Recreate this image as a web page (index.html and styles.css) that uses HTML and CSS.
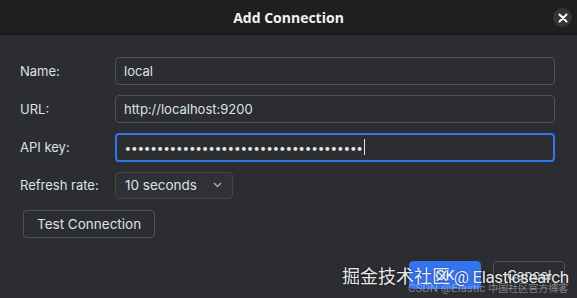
FILE: index.html
```html
<!DOCTYPE html>
<html>
<head>
<meta charset="utf-8">
<link rel="stylesheet" href="styles.css">
</head>
<body>
<div class="dialog">
  <div class="titlebar">
    <span class="title">Add Connection</span>
    <span class="close">
      <svg width="10" height="10" viewBox="0 0 10 10"><path d="M1.5 1.5 L8.5 8.5 M8.5 1.5 L1.5 8.5" stroke="#ffffff" stroke-width="2" stroke-linecap="round"/></svg>
    </span>
  </div>
  <div class="content">
    <div class="form">
      <label class="label">Name:</label>
      <div class="field">local</div>
      <label class="label">URL:</label>
      <div class="field">http://localhost:9200</div>
      <label class="label">API key:</label>
      <div class="field focus"><span class="dots">•••••••••••••••••••••••••••••••••••••</span><span class="caret"></span></div>
      <label class="label">Refresh rate:</label>
      <div class="select-wrap">
        <div class="select">10 seconds
          <svg width="9" height="6" viewBox="0 0 9 6"><path d="M1 1 L4.5 4.5 L8 1" fill="none" stroke="#b4b8bf" stroke-width="1.2"/></svg>
        </div>
      </div>
    </div>
    <div class="test-row"><button class="btn">Test Connection</button></div>
    <div class="actions">
      <button class="btn primary">OK</button>
      <button class="btn">Cancel</button>
    </div>
  </div>
  <div class="wm1"><span class="cjk">掘金技术社区</span><span class="lat"> @ Elasticsearch</span></div>
  <div class="wm2"><span class="lat2">CSDN @Elastic </span><span class="cjk2">中国社区官方博客</span></div>
</div>
</body>
</html>
```

FILE: styles.css
```css
html, body {
  margin: 0;
  padding: 0;
  background: #2b2d30;
}
.dialog {
  position: relative;
  width: 577px;
  height: 298px;
  overflow: hidden;
  background: #2b2d30;
  font-family: "Inter", "Noto Sans", sans-serif;
  font-size: 13px;
  color: #dfe1e5;
}
.titlebar {
  height: 34px;
  background: #1f1f1f;
  border-bottom: 1px solid #161616;
  display: flex;
  align-items: center;
  justify-content: center;
  position: relative;
}
.title {
  font-family: "Open Sans", "Noto Sans", sans-serif;
  font-weight: 700;
  font-size: 14px;
  color: #f2f2f2;
  margin-top: 1px;
}
.close {
  position: absolute;
  right: 5px;
  top: 8px;
  width: 19px;
  height: 19px;
  border-radius: 50%;
  background: #353535;
  display: flex;
  align-items: center;
  justify-content: center;
}
.content {
  padding: 22px 22px 0 20px;
}
.form {
  display: grid;
  grid-template-columns: 95px 440px;
  grid-auto-rows: 28px;
  row-gap: 10px;
  align-items: center;
}
.label {
  color: #dfe1e5;
}
.field {
  box-sizing: border-box;
  height: 28px;
  border: 1px solid #4e5157;
  border-radius: 4px;
  padding: 0 8px;
  display: flex;
  align-items: center;
  color: #dfe1e5;
}
.field.focus {
  border: 2px solid #3574f0;
  padding-left: 8px;
  height: 29px;
}
.dots {
  letter-spacing: 0.75px;
  font-size: 12px;
  font-weight: 700;
  color: #e6e6e6;
}
.caret {
  display: inline-block;
  width: 1px;
  height: 16px;
  background: #dfe1e5;
  margin-left: 1px;
}
.select-wrap {
  display: flex;
}
.select {
  box-sizing: border-box;
  width: 118px;
  height: 27px;
  border: 1px solid #43454a;
  border-radius: 4px;
  background: #2f3135;
  padding: 0 10px 0 9px;
  display: flex;
  align-items: center;
  justify-content: space-between;
  font-size: 13.5px;
}
.test-row {
  padding: 11px 0 0 3px;
}
.btn {
  box-sizing: border-box;
  height: 28px;
  border: 1px solid #4e5157;
  border-radius: 4px;
  background: transparent;
  color: #dfe1e5;
  font-family: "Inter", "Noto Sans", sans-serif;
  font-size: 13.5px;
  padding: 0 13px;
}
.actions {
  display: flex;
  justify-content: flex-end;
  gap: 12px;
  margin-top: 23px;
  margin-right: -10px;
}
.actions .btn {
  width: 72px;
}
.btn.primary {
  background: #3574f0;
  border-color: #3574f0;
  color: #ffffff;
}
.wm1 {
  position: absolute;
  left: 342px;
  top: 263px;
  color: rgba(255, 255, 255, 0.92);
  text-shadow: 0 0 2px rgba(0, 0, 0, 0.6);
  white-space: nowrap;
  line-height: 24px;
}
.wm1 .cjk {
  font-family: "Noto Sans CJK SC", sans-serif;
  font-size: 18px;
}
.wm1 .lat {
  font-family: "Roboto", "Noto Sans", sans-serif;
  font-size: 17px;
  letter-spacing: -0.4px;
}
.wm2 {
  position: absolute;
  left: 408px;
  top: 279px;
  color: rgba(200, 200, 210, 0.55);
  white-space: nowrap;
  line-height: 16px;
}
.wm2 .lat2 {
  font-family: "Roboto", sans-serif;
  font-size: 11.5px;
}
.wm2 .cjk2 {
  font-family: "Noto Sans CJK SC", sans-serif;
  font-size: 10px;
}
```
